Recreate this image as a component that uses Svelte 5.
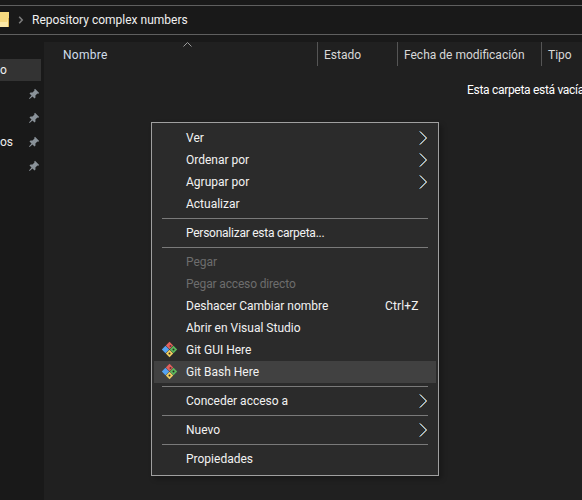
<script>
  const top = [
    { t: 'Ver', arrow: 1 },
    { t: 'Ordenar por', arrow: 1 },
    { t: 'Agrupar por', arrow: 1 },
    { t: 'Actualizar' },
  ];
  const mid = [
    { t: 'Pegar', off: 1 },
    { t: 'Pegar acceso directo', off: 1, slim: 1 },
    { t: 'Deshacer Cambiar nombre', key: 'Ctrl+Z' },
    { t: 'Abrir en Visual Studio' },
    { t: 'Git GUI Here', git: 1 },
    { t: 'Git Bash Here', git: 1, hover: 1 },
  ];
  const groups = [
    top,
    [{ t: 'Personalizar esta carpeta...', tight: 1 }],
    mid,
    [{ t: 'Conceder acceso a', arrow: 1 }],
    [{ t: 'Nuevo', arrow: 1 }],
    [{ t: 'Propiedades' }],
  ];
  const pins = [0, 1, 2, 3];
  const cols = [
    { t: 'Estado', w: 80 },
    { t: 'Fecha de modificación', w: 144 },
    { t: 'Tipo', w: 60 },
  ];
</script>

<div class="win">
  <div class="titlebar"></div>
  <div class="address">
    <svg class="folder" width="10" height="16" viewBox="0 0 10 16">
      <path d="M0 0h9v15H0z" fill="#f6d97f" />
      <path d="M0 10h7l1-4h1v9H0z" fill="#fce9a8" />
      <path d="M8.500 6v9" stroke="#d9b455" />
    </svg>
    <svg class="crumb" width="6" height="8" viewBox="0 0 6 8"><path d="M1.200 .8l3 3.200-3 3.200" fill="none" stroke="#7c7c7c" stroke-width="1.600" /></svg>
    <span class="path">Repository complex numbers</span>
  </div>
  <div class="body">
    <aside class="side">
      <div class="nav sel"><span class="cut">o</span></div>
      {#each pins as p}
        <div class="nav">
          {#if p === 2}<span class="cut">os</span>{/if}
          <svg class="pin" width="12" height="12" viewBox="0 0 12 12">
            <path d="M7 .8l4.200 4.200-1 .8-.8-.3-2 2 .1 2-1 1-2-2L1.600 11 1 10.400l2.500-2.900-2-2 1-1 2 .1 2-2-.3-.8z" fill="#8a9299" />
          </svg>
        </div>
      {/each}
    </aside>
    <main class="content">
      <div class="head">
        <div class="c-name">Nombre
          <svg class="sort" width="9" height="5" viewBox="0 0 9 5"><path d="M.5 4.500l4-4 4 4" fill="none" stroke="#9a9a9a" /></svg>
        </div>
        {#each cols as c}
          <div class="col" style="width:{c.w}px">{c.t}</div>
        {/each}
      </div>
      <div class="empty">Esta carpeta está vacía</div>
    </main>
  </div>

  <div class="menu">
    {#each groups as g, i}
      {#if i > 0}<div class="sep"></div>{/if}
      {#each g as it}
        <div class="item" class:off={it.off} class:hover={it.hover} class:tight={it.tight} class:slim={it.slim}>
          {#if it.git}
            <svg class="git" width="17" height="17" viewBox="0 0 17 17">
              <path d="M8.500 .8l3.700 3.700-3.700 3.700-3.700-3.700z" fill="#e0605c" />
              <path d="M4.500 4.800l3.700 3.700-3.700 3.700L.8 8.500z" fill="#55a3f2" />
              <path d="M12.500 4.800l3.700 3.700-3.700 3.700-3.700-3.700z" fill="#5cb85c" />
              <path d="M8.500 8.800l3.700 3.700-3.700 3.700-3.700-3.700z" fill="#f0cf62" />
              <circle cx="9.500" cy="5" r="1" fill="#5a3a3a" />
              <circle cx="12.500" cy="8.500" r="1" fill="#2b2b2b" />
              <circle cx="8.500" cy="12.500" r="1" fill="#2b2b2b" />
            </svg>
          {/if}
          <span class="label">{it.t}</span>
          {#if it.key}<span class="key">{it.key}</span>{/if}
          {#if it.arrow}
            <svg class="arrow" width="9" height="14" viewBox="0 0 9 14">
              <path d="M.5 .5l6.500 6.500-6.500 6.500" fill="none" stroke="#4fa8ee" stroke-width="1" />
              <path d="M1.500 .5l6.500 6.500-6.500 6.500" fill="none" stroke="#e8a13c" stroke-width=".8" />
              <path d="M1 .5l6.500 6.500-6.500 6.500" fill="none" stroke="#e8eef2" stroke-width=".6" />
            </svg>
          {/if}
        </div>
      {/each}
    {/each}
  </div>
</div>

<style>
  :global(body) { margin: 0; background: #191919; }
  .win {
    position: relative;
    width: 582px;
    height: 500px;
    overflow: hidden;
    background: #191919;
    color: #fff;
    font-family: Roboto, "Noto Sans", sans-serif;
    font-size: 12px;
    display: flex;
    flex-direction: column;
  }
  .titlebar { height: 5px; border-bottom: 1px solid #5f5f5f; box-sizing: content-box; flex: none; }
  .address {
    height: 29px;
    flex: none;
    box-sizing: border-box;
    border-bottom: 1px solid #5f5f5f;
    display: flex;
    align-items: center;
    background: #191919;
  }
  .folder { margin-right: 8px; }
  .crumb { margin-right: 8px; }
  .path { color: #f0f0f0; }
  .body { flex: 1; display: flex; padding-top: 7px; min-height: 0; }
  .side { width: 44px; flex: none; padding-top: 17px; box-sizing: border-box; }
  .nav {
    height: 24px;
    width: 41px;
    display: flex;
    align-items: center;
    position: relative;
  }
  .nav.sel { background: #333; height: 22px; margin-bottom: 1px; }
  .cut { color: #f0f0f0; }
  .pin { position: absolute; left: 28px; top: 6px; }
  .content { flex: 1; background: #202020; min-width: 0; }
  .head { height: 24px; display: flex; color: #d8d8d8; }
  .c-name { width: 273px; box-sizing: border-box; padding: 6px 0 0 19px; position: relative; color: #d0deea; flex: none; letter-spacing: 0.3px; }
  .sort { position: absolute; left: 139px; top: 0; }
  .col { border-left: 1px solid #555; flex: none; box-sizing: border-box; padding: 6px 0 0 6px; }
  .empty { margin: 17px 0 0 423px; white-space: nowrap; color: #fff; letter-spacing: -0.3px; }
  .menu {
    position: absolute;
    left: 151px;
    top: 122px;
    width: 288px;
    height: 354px;
    box-sizing: border-box;
    background: #2b2b2b;
    border: 1px solid #a0a0a0;
    padding: 4px 2px;
    box-shadow: 3px 3px 5px rgba(0, 0, 0, 0.25);
    color: #f2f2f2;
  }
  .item {
    height: 22px;
    display: flex;
    align-items: center;
    position: relative;
    padding-left: 32px;
  }
  .item.off { color: #6d6d6d; }
  .item.hover { background: #414141; }
  .item.tight { letter-spacing: -0.25px; }
  .item.slim { letter-spacing: -0.15px; }
  .git { position: absolute; left: 7px; top: 2px; }
  .key { position: absolute; left: 231px; letter-spacing: 0.15px; }
  .arrow { position: absolute; left: 265px; top: 4px; }
  .sep { height: 1px; background: #7a7a7a; margin: 3px 8px; }
</style>
